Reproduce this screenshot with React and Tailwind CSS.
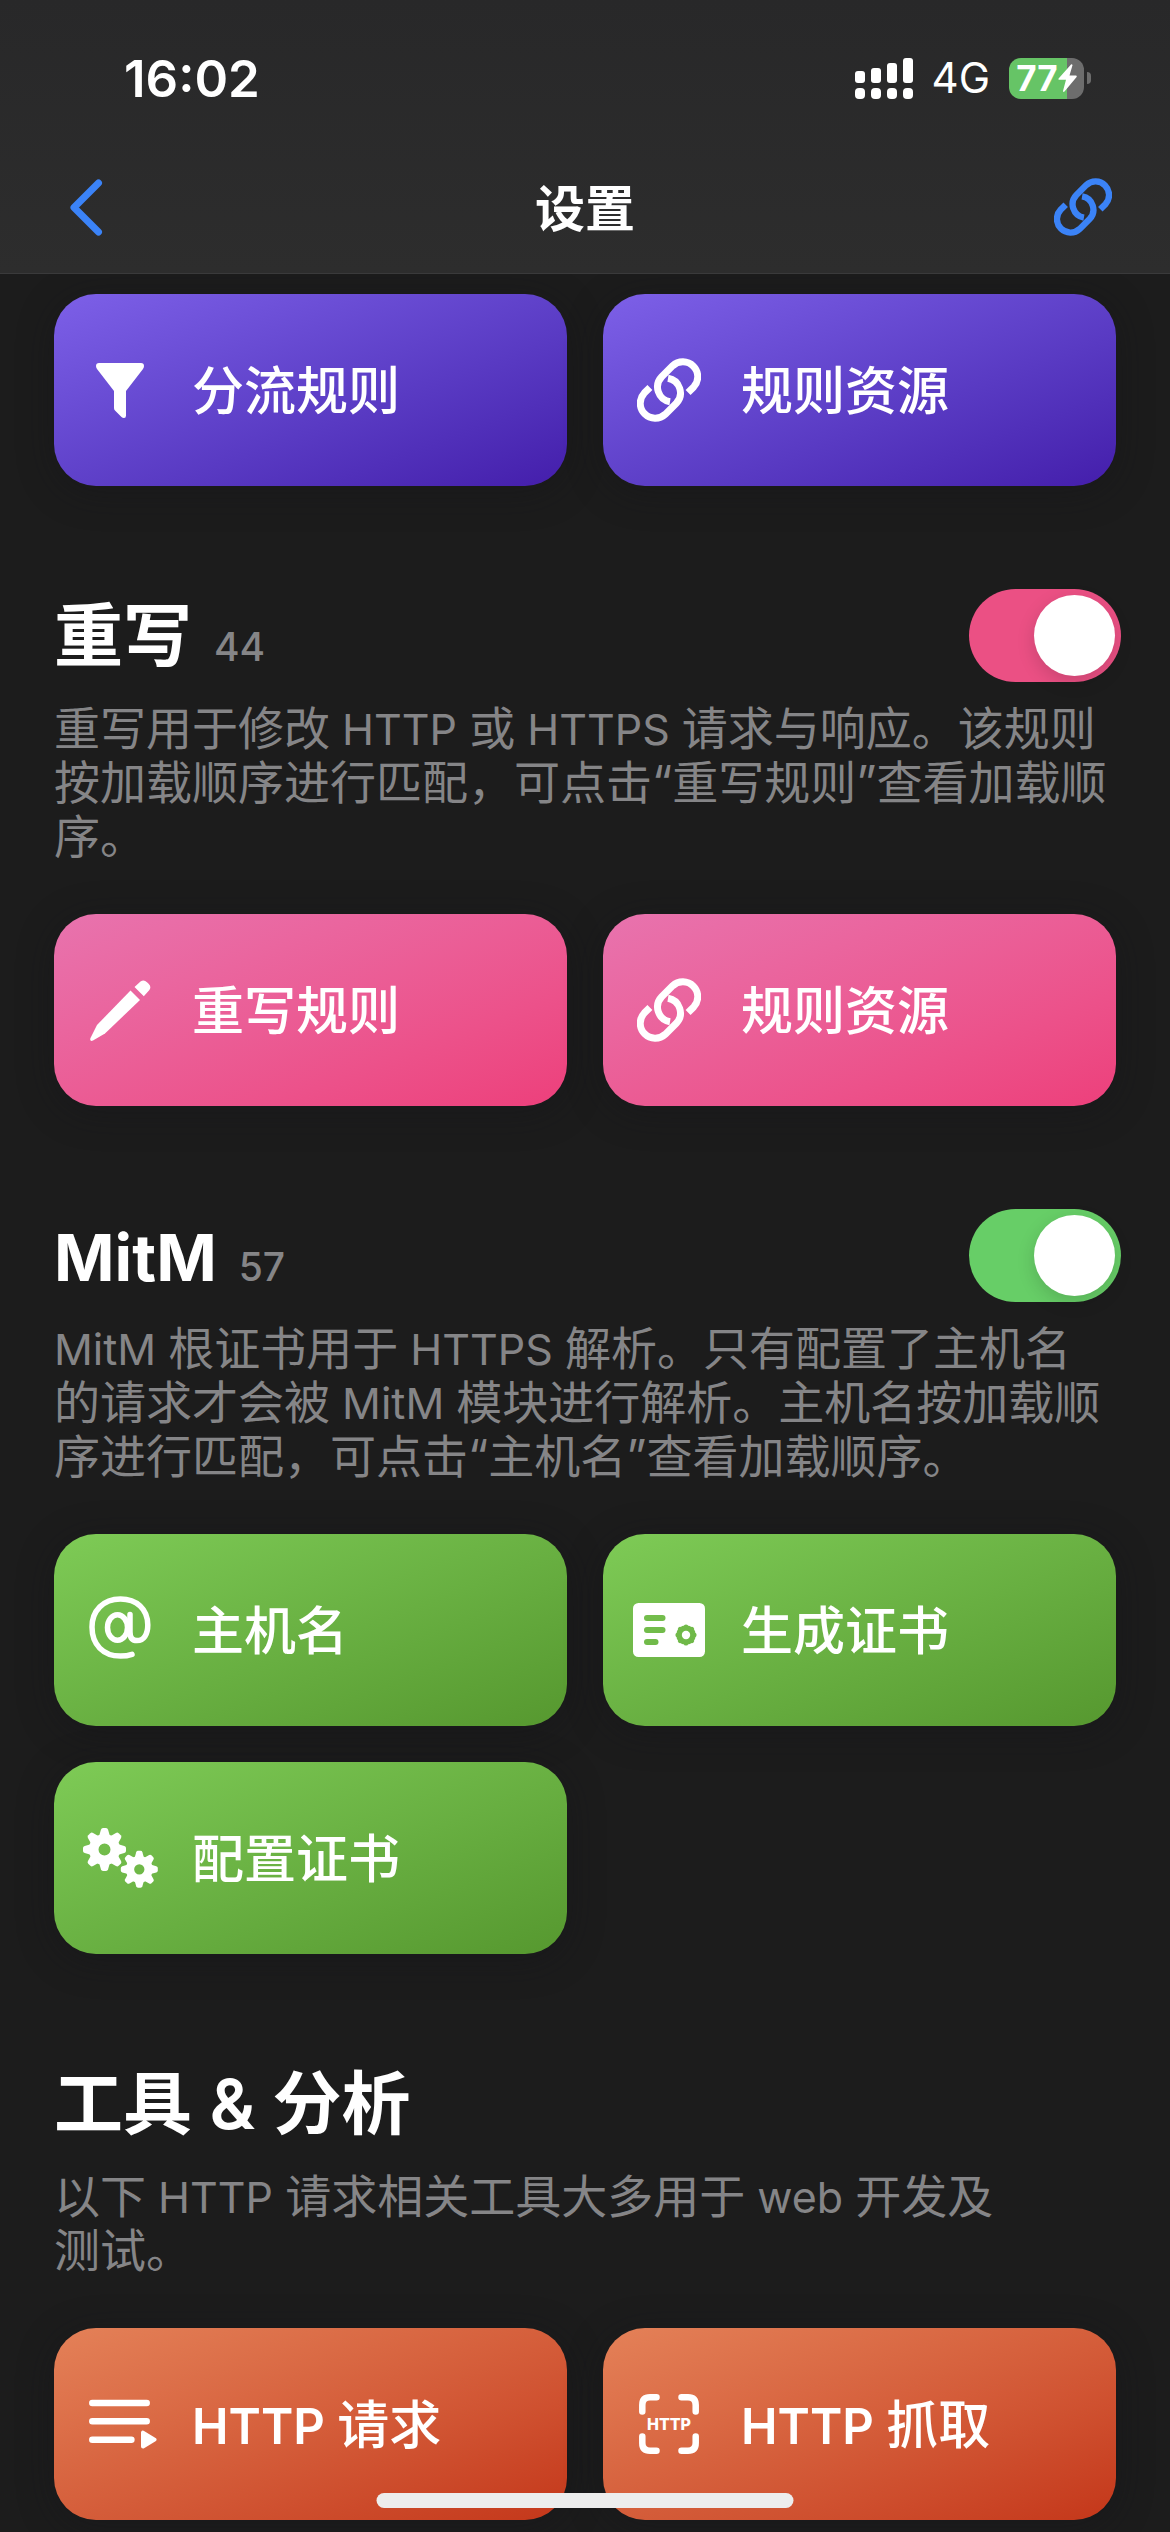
import React from "react";

function ChainIcon({ className }) {
  return (
    <svg viewBox="0 0 57 57" className={className} fill="none" stroke="currentColor" strokeWidth="6.2" aria-hidden="true">
      <path d="M27.6 18A13.3 13.3 0 0 1 35 40.3L25.3 50A13.3 13.3 0 0 1 6.5 31.2L11.5 26.2" />
      <path d="M29.4 39A13.3 13.3 0 0 1 22 16.7L31.7 7A13.3 13.3 0 0 1 50.5 25.8L45.5 30.8" />
    </svg>
  );
}

function FilterIcon() {
  return (
    <svg viewBox="0 0 48 55" className="h-[55px] w-[48px]" fill="currentColor" aria-hidden="true">
      <path d="M3 0H45Q48 0 48 3Q48 4.500 47 6L30 28V52.500Q30 55 28 55Q26.500 55 25.500 54L19 47.500Q18 46.500 18 45V28L1 6Q0 4.500 0 3Q0 0 3 0Z" />
    </svg>
  );
}

function PencilIcon() {
  return (
    <svg viewBox="0 0 61 61" className="size-[61px]" fill="currentColor" aria-hidden="true">
      <path d="M40.500 10.500L50 20L15 53.500L3 60.600Q-.5 61.800 .4 58.300L7 45Z" />
      <path d="M44.500 7L50.500 1.600Q53.800 -1 57 2.200L58.600 3.800Q61.800 7 59.200 10.300L53.800 16.300Z" />
    </svg>
  );
}

function AtIcon() {
  return (
    <svg viewBox="0 0 62 68" className="h-[68px] w-[62px]" fill="none" stroke="currentColor" strokeWidth="5.5" strokeLinecap="round" aria-hidden="true">
      <ellipse cx="28.500" cy="31.500" rx="10" ry="12.800" />
      <path d="M41 18.500V36C41 42 43.500 44.600 48 44.600C55 44.600 58.800 38 58.800 29C58.800 13 47.500 3 31.500 3C14 3 3 15 3 31C3 48.500 14 60 31.500 60C36 60 39.500 59.500 43 58.300" />
    </svg>
  );
}

function CertificateIcon() {
  return (
    <svg viewBox="0 0 72 54" className="h-[54px] w-[72px]" aria-hidden="true">
      <mask id="certificate-cutout">
        <rect width="72" height="54" rx="5.500" fill="white" />
        <rect x="11" y="12" width="21.500" height="6" rx="3" fill="black" />
        <rect x="11" y="24" width="21.500" height="6" rx="3" fill="black" />
        <rect x="11" y="36" width="14.500" height="6" rx="3" fill="black" />
        <circle cx="53" cy="32" r="9.800" fill="black" />
        {[0, 45, 90, 135, 180, 225, 270, 315].map((a) => (
          <circle key={a} cx="53" cy="23.600" r="2.200" fill="black" transform={`rotate(${a} 53 32)`} />
        ))}
        <circle cx="53" cy="32" r="4.200" fill="white" />
      </mask>
      <rect width="72" height="54" fill="currentColor" mask="url(#certificate-cutout)" />
    </svg>
  );
}

function Gear({ x, y, scale }) {
  return (
    <g transform={`translate(${x} ${y}) scale(${scale})`}>
      <circle r="10.800" fill="none" stroke="currentColor" strokeWidth="9.600" />
      {[0, 45, 90, 135, 180, 225, 270, 315].map((a) => (
        <path key={a} transform={`rotate(${a})`} fill="currentColor" d="M-5.500 -13L-3.600 -19.800Q-3.100 -21.500 -1.500 -21.500H1.500Q3.100 -21.500 3.600 -19.800L5.500 -13Z" />
      ))}
    </g>
  );
}

function GearsIcon() {
  return (
    <svg viewBox="0 0 75 60" className="h-[60px] w-[75px]" aria-hidden="true">
      <Gear x={21.5} y={21.5} scale={1} />
      <Gear x={56.3} y={41.3} scale={0.86} />
    </svg>
  );
}

function RequestListIcon() {
  return (
    <svg viewBox="-6 -8 74 52" className="h-[52px] w-[74px]" stroke="currentColor" strokeWidth="6.500" strokeLinecap="round" strokeLinejoin="round" aria-hidden="true">
      <path fill="none" d="M3.300 -3H57.700M3.300 15.300H57.700M3.300 33.700H42.400" />
      <path fill="currentColor" strokeWidth="4" d="M54 26.600V40.600L65.500 33.600Z" />
    </svg>
  );
}

function HttpScanIcon() {
  return (
    <svg viewBox="0 0 60 60" className="size-[60px]" aria-hidden="true">
      <path
        fill="none"
        stroke="currentColor"
        strokeWidth="6.500"
        strokeLinecap="round"
        d="M3.300 17.500V11Q3.300 3.300 11 3.300H17.500M42.500 3.300H49Q56.700 3.300 56.700 11V17.500M56.700 42.500V49Q56.700 56.700 49 56.700H42.500M17.500 56.700H11Q3.300 56.700 3.300 49V42.500"
      />
      <text x="30" y="36" textAnchor="middle" fill="currentColor" className="font-['Inter'] text-[16px] font-extrabold">HTTP</text>
    </svg>
  );
}

/* Sets runs of Latin letters in their own, slightly smaller size beside the Chinese text. */
function MixedText({ children, latin }) {
  return children.split(/( ?[A-Za-z]+ ?)/).map((part, i) =>
    i % 2 ? <span key={i} className={latin}>{part}</span> : part
  );
}

const chain = <ChainIcon className="size-[64px]" />;

const sections = [
  {
    id: "rewrite",
    title: "重写",
    count: 44,
    toggle: "bg-[#eb5084]",
    lines: ["重写用于修改 HTTP 或 HTTPS 请求与响应。该规则", "按加载顺序进行匹配，可点击“重写规则”查看加载顺", "序。"],
    tone: "from-[#e873ae] to-[#ed3f7b]",
    cards: [
      { label: "重写规则", icon: <PencilIcon /> },
      { label: "规则资源", icon: chain },
    ],
  },
  {
    id: "mitm",
    title: "MitM",
    count: 57,
    toggle: "bg-[#67ce67]",
    lines: ["MitM 根证书用于 HTTPS 解析。只有配置了主机名", "的请求才会被 MitM 模块进行解析。主机名按加载顺", "序进行匹配，可点击“主机名”查看加载顺序。"],
    tone: "from-[#7ecb56] to-[#56982f]",
    cards: [
      { label: "主机名", icon: <AtIcon /> },
      { label: "生成证书", icon: <CertificateIcon /> },
      { label: "配置证书", icon: <GearsIcon /> },
    ],
  },
  {
    id: "tools",
    title: "工具 & 分析",
    lines: ["以下 HTTP 请求相关工具大多用于 web 开发及", "测试。"],
    tone: "from-[#e48158] to-[#c43619]",
    cards: [
      { label: "HTTP 请求", icon: <RequestListIcon /> },
      { label: "HTTP 抓取", icon: <HttpScanIcon /> },
    ],
  },
];

function CardGrid({ cards, tone }) {
  return (
    <div className="grid grid-cols-2 gap-[36px] px-[54px]">
      {cards.map((card) => (
        <button
          key={card.label}
          type="button"
          className={`flex h-[192px] items-center gap-[30px] rounded-[42px] bg-linear-to-br pl-[24px] text-left shadow-[0_6px_36px_rgba(20,20,24,0.4)] ${tone}`}
        >
          <span className="flex w-[84px] shrink-0 justify-center">{card.icon}</span>
          <span className="pt-1 text-[52px] leading-[72px] font-medium">
            <MixedText latin="text-[49px] leading-none font-semibold">{card.label}</MixedText>
          </span>
        </button>
      ))}
    </div>
  );
}

function Section({ section }) {
  return (
    <section className="mt-[103px]">
      <div className="flex h-[93px] items-center justify-between pr-[49px] pl-[54px]">
        <div className="flex items-baseline gap-[22px]">
          <h2 id={section.id} className="text-[69px] leading-[90px] font-semibold">
            <MixedText latin="text-[65px] leading-none font-bold">{section.title}</MixedText>
          </h2>
          {section.count && <span className="text-[39px] leading-none font-medium text-[#858587]">{section.count}</span>}
        </div>
        {section.toggle && (
          <input
            type="checkbox"
            role="switch"
            defaultChecked
            aria-labelledby={section.id}
            className={`flex h-[93px] w-[152px] shrink-0 appearance-none rounded-full p-[6px] before:size-[81px] before:rounded-full before:bg-white before:shadow-[0_6px_18px_rgba(0,0,0,0.15)] checked:justify-end ${section.toggle}`}
          />
        )}
      </div>
      <p className="mt-[19px] mb-[51px] px-[54px] text-[46px] leading-[54px] text-[#858587]">
        {section.lines.map((line) => (
          <span key={line} className="block whitespace-nowrap">
            <MixedText latin="text-[43px] leading-none">{line}</MixedText>
          </span>
        ))}
      </p>
      <CardGrid cards={section.cards} tone={section.tone} />
    </section>
  );
}

function StatusBar() {
  return (
    <div className="flex h-[141px] items-center justify-between pt-[15px] pr-[79px] pl-[124px]">
      <time className="text-[51px] leading-none font-semibold">16:02</time>
      <div className="flex items-center gap-[19px]">
        <svg viewBox="0 0 58 41" className="h-[41px] w-[58px]" fill="currentColor" role="img" aria-label="信号">
          <rect x="0" y="13" width="10" height="12" rx="3" />
          <rect x="16" y="10" width="10" height="15" rx="3" />
          <rect x="32" y="5" width="10" height="20" rx="3" />
          <rect x="48" y="0" width="10" height="25" rx="3" />
          <rect x="0" y="30" width="10" height="11" rx="4" />
          <rect x="16" y="30" width="10" height="11" rx="4" />
          <rect x="32" y="30" width="10" height="11" rx="4" />
          <rect x="48" y="30" width="10" height="11" rx="4" />
        </svg>
        <span className="text-[42px] leading-none">4G</span>
        <div className="flex items-center gap-[3px]">
          <div className="flex h-[41px] w-[75px] items-center justify-center rounded-[12px] bg-linear-to-r from-[#66c466] from-77% to-[#6d6d6d] to-77% text-[35px] leading-none font-bold">
            77
            <svg viewBox="0 0 19 28" className="h-[28px] w-[19px]" fill="currentColor" aria-hidden="true">
              <path d="M13 .5L.6 14.500Q0 15.800 1.500 15.800H8L5 27Q5.200 28.500 6.500 27.500L18.600 13Q19.200 11.600 17.800 11.500H11.500L14.500 1.200Q14.200 -.3 13 .5Z" />
            </svg>
          </div>
          <span className="h-[12px] w-[4px] rounded-r-full bg-[#6d6d6d]" />
        </div>
      </div>
    </div>
  );
}

export default function App() {
  return (
    <div lang="zh-CN" className="min-h-screen bg-[#1c1c1c] pb-[11px] font-['Inter','Noto_Sans_CJK_SC',sans-serif] text-white">
      <header className="sticky top-0 z-10 border-b border-[#3a3a3b] bg-linear-to-b from-[#282829] to-[#2d2d2d]">
        <StatusBar />
        <nav className="grid h-[132px] grid-cols-[1fr_auto_1fr] items-center px-[58px]">
          <button type="button" aria-label="返回" className="justify-self-start pl-[11px] text-[#3b83f7]">
            <svg viewBox="0 0 34 57" className="h-[57px] w-[34px]" fill="none" stroke="currentColor" strokeWidth="7" strokeLinecap="round" strokeLinejoin="round">
              <path d="M29.500 4L5 28.500L29.500 53" />
            </svg>
          </button>
          <h1 className="pt-1 text-[50px] leading-[72px] font-semibold">设置</h1>
          <button type="button" aria-label="链接" className="justify-self-end text-[#3b83f7]">
            <ChainIcon className="size-[58px]" />
          </button>
        </nav>
      </header>
      <main className="pt-[20px]">
        <CardGrid
          tone="from-[#7d60e8] to-[#441dab]"
          cards={[
            { label: "分流规则", icon: <FilterIcon /> },
            { label: "规则资源", icon: chain },
          ]}
        />
        {sections.map((section) => (
          <Section key={section.id} section={section} />
        ))}
      </main>
      <div className="fixed bottom-[24px] left-1/2 h-[15px] w-[417px] -translate-x-1/2 rounded-full bg-[#ededed]" />
    </div>
  );
}
